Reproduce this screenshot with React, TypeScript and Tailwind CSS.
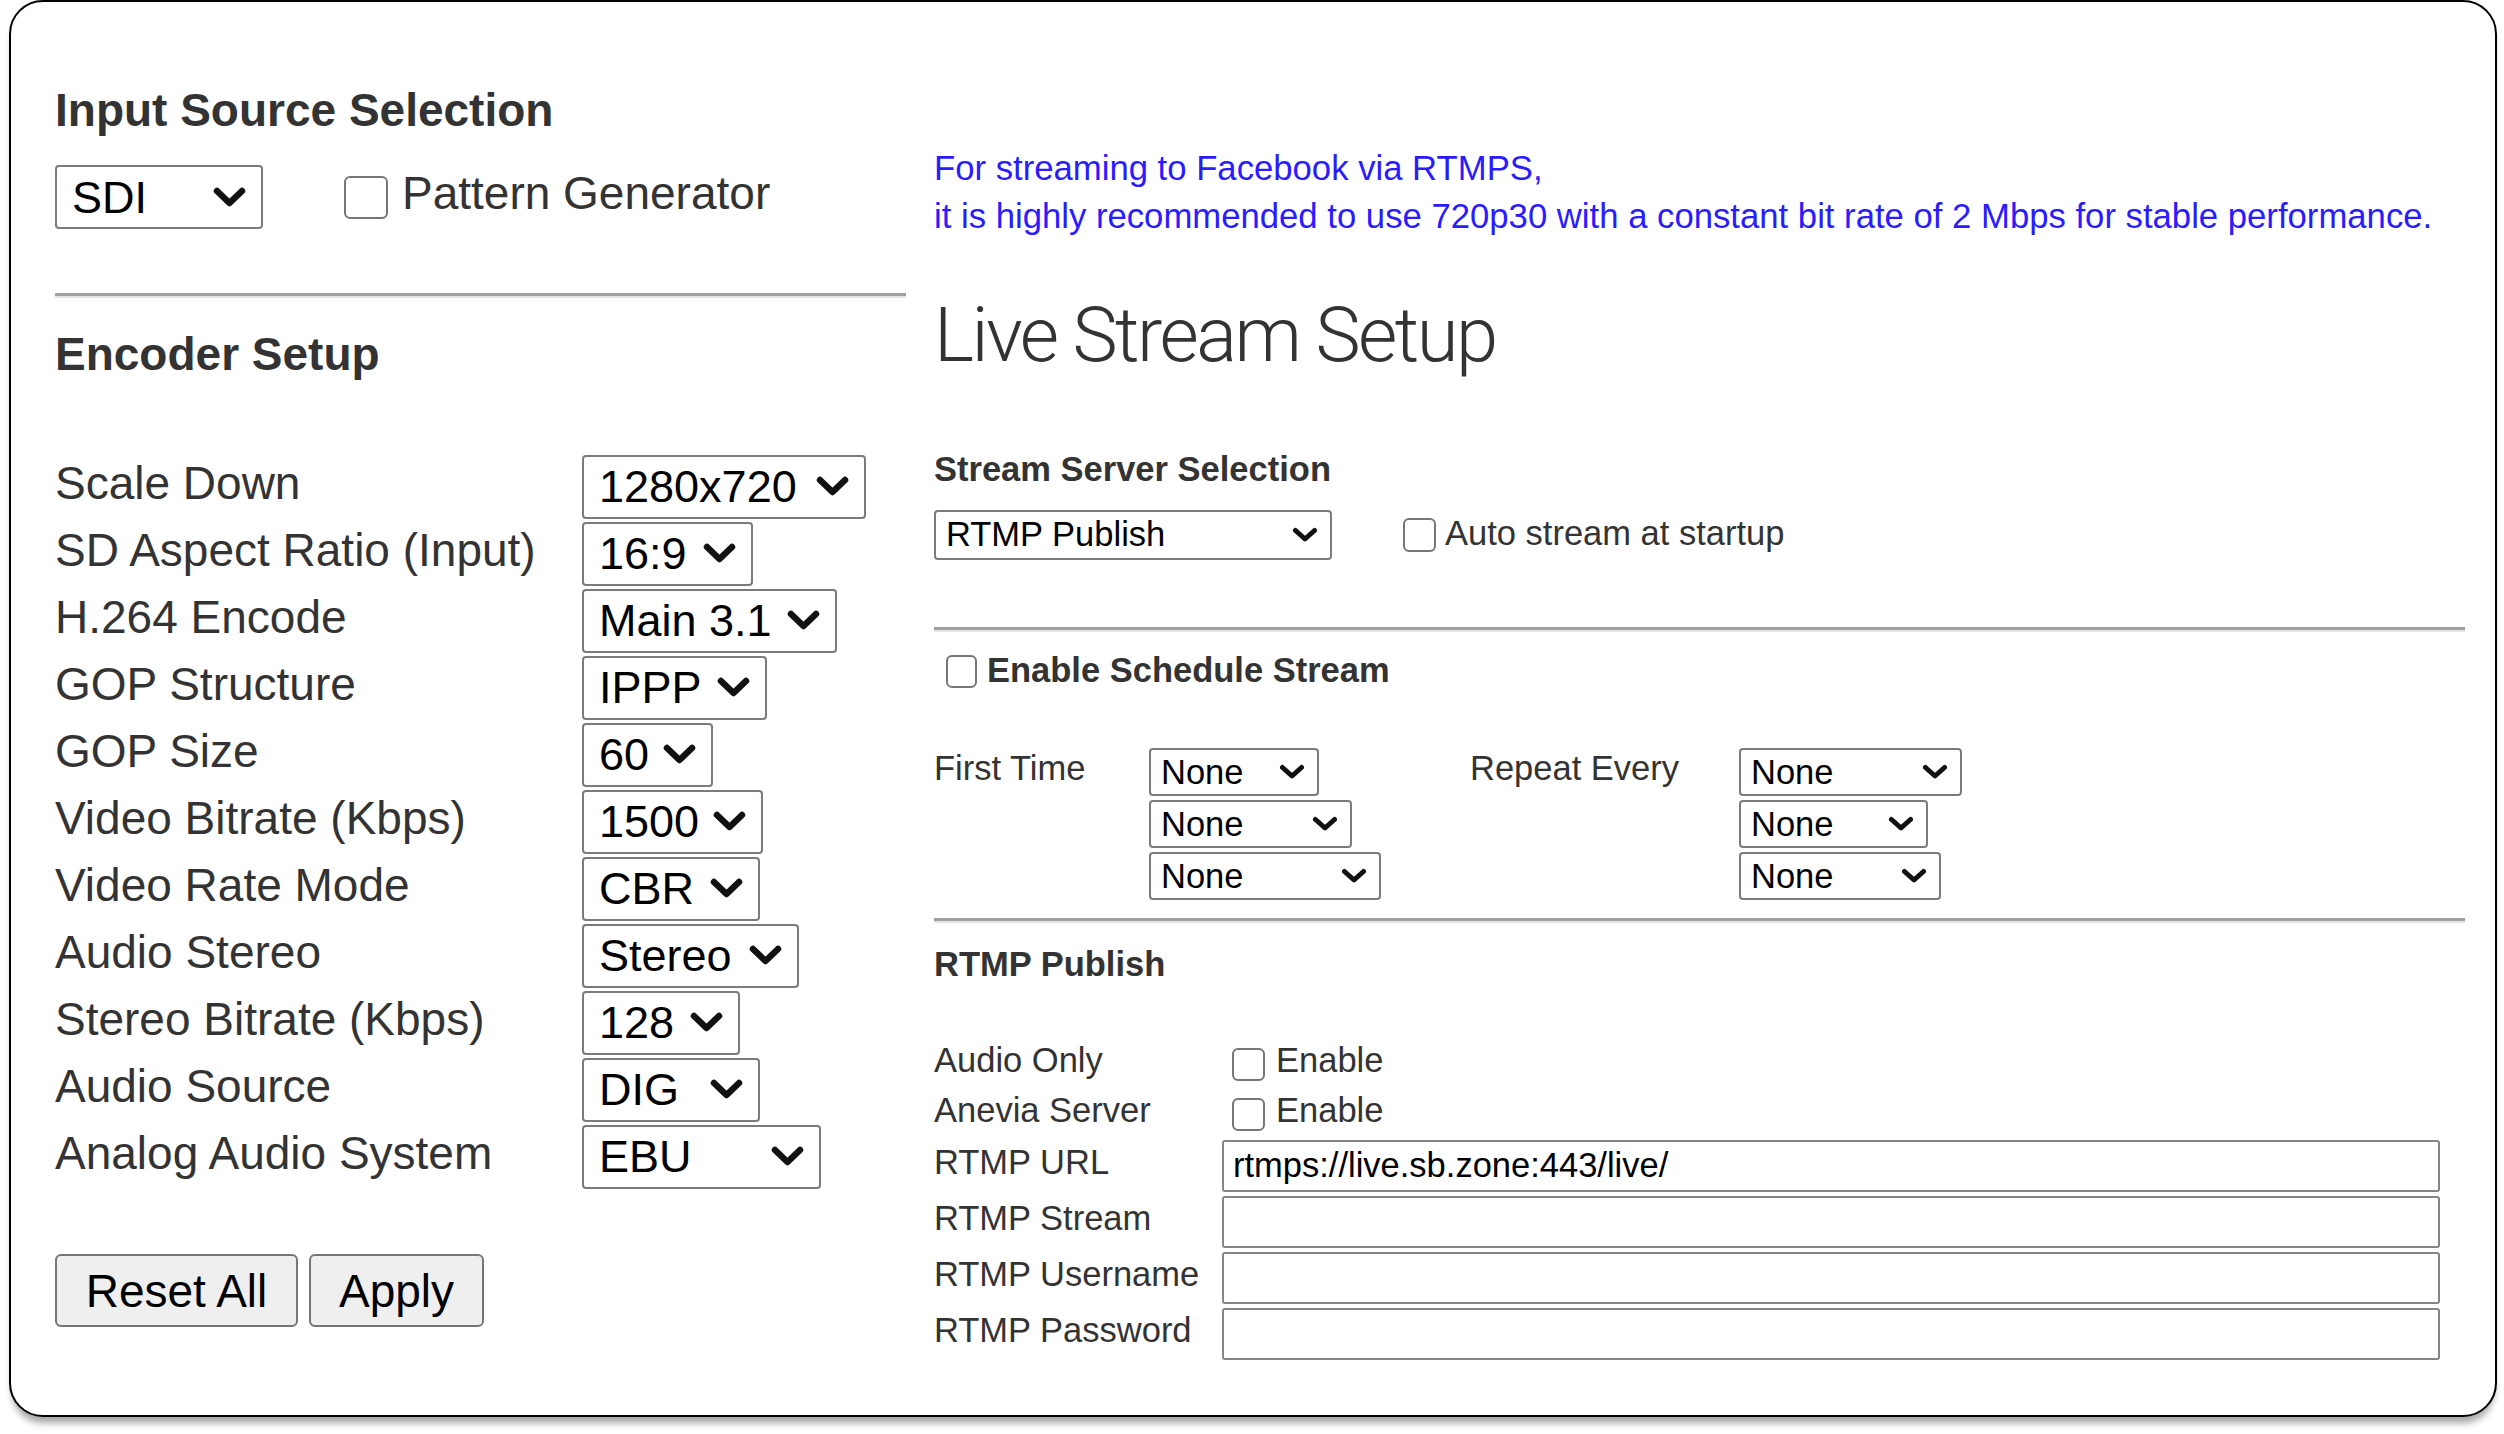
import React from "react";

const sans = "font-['Liberation_Sans',Arial,sans-serif]";

function Chevron({ big }: { big?: boolean }) {
  if (big) {
    return (
      <svg width="33" height="21" viewBox="0 0 33 21" className="shrink-0">
        <polyline points="4,4 16.5,16 29,4" fill="none" stroke="#111" strokeWidth="6.5" strokeLinecap="round" strokeLinejoin="round" />
      </svg>
    );
  }
  return (
    <svg width="26" height="16" viewBox="0 0 26 16" className="shrink-0">
      <polyline points="3.5,3.5 13,12 22.5,3.5" fill="none" stroke="#111" strokeWidth="5" strokeLinecap="round" strokeLinejoin="round" />
    </svg>
  );
}

function Select({ value, className, big }: { value: string; className: string; big?: boolean }) {
  return (
    <div
      className={`flex shrink-0 items-center justify-between rounded-[4px] border-2 border-[#7b7b7b] bg-white leading-none text-black ${
        big ? "pl-[15px] pr-[15px] text-[45px]" : "pl-[10px] pr-[12px] text-[34.5px]"
      } ${className}`}
    >
      <span>{value}</span>
      <Chevron big={big} />
    </div>
  );
}

function Check({ className }: { className: string }) {
  return <input type="checkbox" className={`shrink-0 appearance-none rounded-[6px] border-2 border-[#767676] bg-white ${className}`} />;
}

function Divider() {
  return <div className="h-[5px] border-t-[3px] border-t-[#a0a0a0] border-b-2 border-b-[#e4e4e4]" />;
}

const encoderRows = [
  { label: "Scale Down", value: "1280x720", w: "w-[284px]" },
  { label: "SD Aspect Ratio (Input)", value: "16:9", w: "w-[171px]" },
  { label: "H.264 Encode", value: "Main 3.1", w: "w-[255px]" },
  { label: "GOP Structure", value: "IPPP", w: "w-[185px]" },
  { label: "GOP Size", value: "60", w: "w-[131px]" },
  { label: "Video Bitrate (Kbps)", value: "1500", w: "w-[181px]" },
  { label: "Video Rate Mode", value: "CBR", w: "w-[178px]" },
  { label: "Audio Stereo", value: "Stereo", w: "w-[217px]" },
  { label: "Stereo Bitrate (Kbps)", value: "128", w: "w-[158px]" },
  { label: "Audio Source", value: "DIG", w: "w-[178px]" },
  { label: "Analog Audio System", value: "EBU", w: "w-[239px]" },
];

const rtmpFields = [
  { label: "RTMP URL", value: "rtmps://live.sb.zone:443/live/" },
  { label: "RTMP Stream", value: "" },
  { label: "RTMP Username", value: "" },
  { label: "RTMP Password", value: "" },
];

export default function App() {
  return (
    <div className={`h-[1434px] w-[2504px] overflow-hidden bg-white ${sans}`}>
      <div className="ml-[9px] h-[1417px] w-[2488px] rounded-[34px] border-2 border-black bg-white pl-[44px] shadow-[0_9px_7px_-3px_rgba(0,0,0,0.35)]">
        <div className="grid grid-cols-[851px_1531px] gap-x-[28px]">
          {/* left column */}
          <div className="flex flex-col">
            <h2 className="mt-[85px] text-[46px] font-bold leading-none text-[#333]">Input Source Selection</h2>
            <div className="mt-[32px] flex items-center">
              <Select value="SDI" big className="h-[64px] w-[208px]" />
              <Check className="ml-[81px] h-[43px] w-[44px]" />
              <span className="mb-[8px] ml-[14px] text-[46px] leading-none text-[#333]">Pattern Generator</span>
            </div>
            <div className="mt-[64px]">
              <Divider />
            </div>
            <h2 className="mt-[33px] text-[46px] font-bold leading-none text-[#333]">Encoder Setup</h2>
            <div className="mt-[76px] flex flex-col">
              {encoderRows.map((r) => (
                <div key={r.label} className="flex h-[67px] items-center">
                  <span className="mb-[8px] w-[527px] text-[46px] leading-none text-[#333]">{r.label}</span>
                  <Select value={r.value} big className={`h-[64px] ${r.w}`} />
                </div>
              ))}
            </div>
            <div className="mt-[64px] flex gap-[11px]">
              <button className="h-[73px] w-[243px] rounded-[6px] border-2 border-[#767676] bg-[#efefef] text-[46px] leading-none text-black">Reset All</button>
              <button className="h-[73px] w-[175px] rounded-[6px] border-2 border-[#767676] bg-[#efefef] text-[46px] leading-none text-black">Apply</button>
            </div>
          </div>

          {/* right column */}
          <div className="flex flex-col">
            <div className="mt-[142px] text-[34.7px] leading-[48px] text-[#2a1cff]">
              <p>For streaming to Facebook via RTMPS,</p>
              <p>it is highly recommended to use 720p30 with a constant bit rate of 2 Mbps for stable performance.</p>
            </div>
            <h1 className="mt-[57px] font-['Roboto',sans-serif] text-[76px] font-light leading-none tracking-[-2.5px] text-[#333]">Live Stream Setup</h1>
            <h3 className="mt-[79px] text-[34.5px] font-bold leading-none text-[#333]">Stream Server Selection</h3>
            <div className="mt-[23px] flex items-center">
              <Select value="RTMP Publish" className="h-[50px] w-[398px]" />
              <Check className="ml-[71px] h-[34px] w-[33px]" />
              <span className="mb-[3px] ml-[9px] text-[34.5px] leading-none text-[#333]">Auto stream at startup</span>
            </div>
            <div className="mt-[67px]">
              <Divider />
            </div>
            <div className="mt-[21px] flex items-center">
              <Check className="ml-[12px] h-[33px] w-[31px]" />
              <span className="mb-[3px] ml-[10px] text-[34.5px] font-bold leading-none text-[#333]">Enable Schedule Stream</span>
            </div>
            <div className="mt-[58px] flex items-start">
              <span className="w-[215px] pt-[3px] text-[34.5px] leading-none text-[#333]">First Time</span>
              <div className="flex w-[321px] flex-col gap-[4px]">
                <Select value="None" className="h-[48px] w-[170px]" />
                <Select value="None" className="h-[48px] w-[203px]" />
                <Select value="None" className="h-[48px] w-[232px]" />
              </div>
              <span className="w-[269px] pt-[3px] text-[34.5px] leading-none text-[#333]">Repeat Every</span>
              <div className="flex flex-col gap-[4px]">
                <Select value="None" className="h-[48px] w-[223px]" />
                <Select value="None" className="h-[48px] w-[189px]" />
                <Select value="None" className="h-[48px] w-[202px]" />
              </div>
            </div>
            <div className="mt-[18px]">
              <Divider />
            </div>
            <h3 className="mt-[24px] text-[34.5px] font-bold leading-none text-[#333]">RTMP Publish</h3>
            <div className="mt-[58px] flex flex-col">
              {["Audio Only", "Anevia Server"].map((l) => (
                <div key={l} className="flex h-[50px] items-center">
                  <span className="mb-[8px] w-[288px] text-[34.5px] leading-none text-[#333]">{l}</span>
                  <Check className="ml-[10px] h-[33px] w-[33px]" />
                  <span className="mb-[8px] ml-[11px] text-[34.5px] leading-none text-[#333]">Enable</span>
                </div>
              ))}
            </div>
            <div className="flex flex-col gap-[4px]">
              {rtmpFields.map((f) => (
                <div key={f.label} className="flex h-[52px] items-center">
                  <span className="mb-[6px] w-[288px] text-[34.5px] leading-none text-[#333]">{f.label}</span>
                  <input
                    defaultValue={f.value}
                    className="h-[52px] w-[1218px] rounded-[3px] border-2 border-[#858585] bg-white pl-[9px] text-[34.5px] leading-none text-black outline-none"
                  />
                </div>
              ))}
            </div>
          </div>
        </div>
      </div>
    </div>
  );
}
